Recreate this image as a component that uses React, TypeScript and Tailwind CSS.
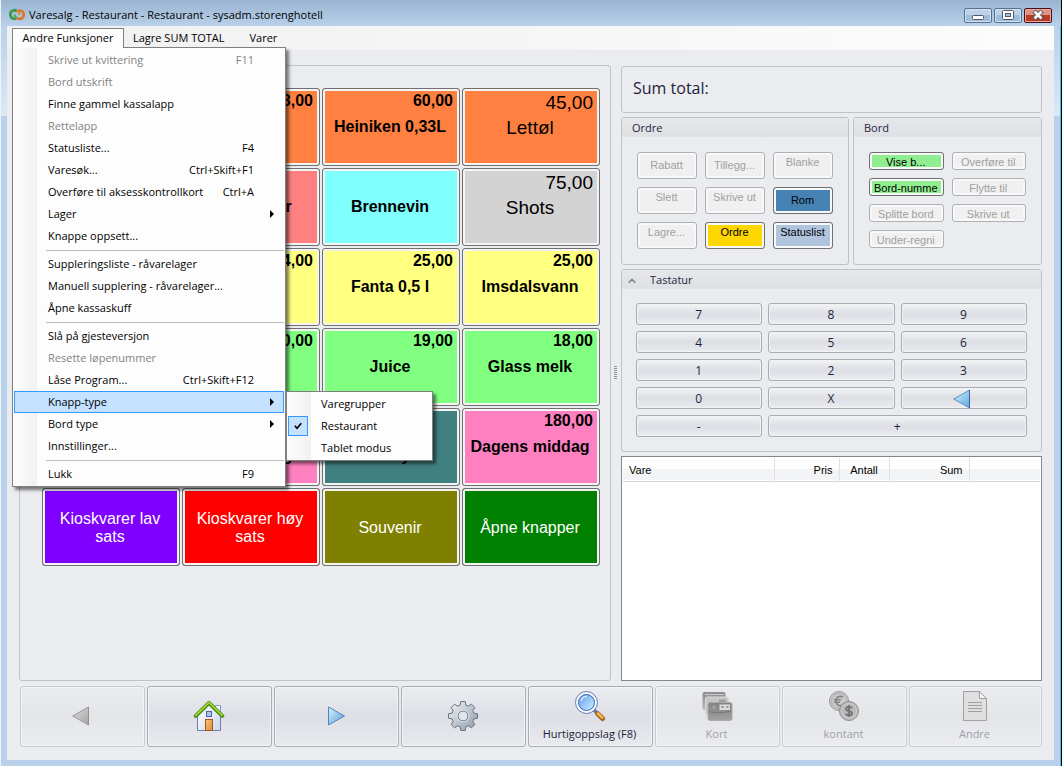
import type { ReactNode } from "react"
import clsx from "clsx"

type MenuEntry = {
  label: string
  shortcut?: string
  disabled?: boolean
  submenu?: boolean
  open?: boolean
}

type Product = {
  name?: string
  price?: string
  color: string
  large?: boolean
  light?: boolean
}

/* null draws a separator line */
const menuEntries: (MenuEntry | null)[] = [
  { label: "Skrive ut kvittering", shortcut: "F11", disabled: true },
  { label: "Bord utskrift", disabled: true },
  { label: "Finne gammel kassalapp" },
  { label: "Rettelapp", disabled: true },
  { label: "Statusliste...", shortcut: "F4" },
  { label: "Varesøk...", shortcut: "Ctrl+Skift+F1" },
  { label: "Overføre til aksesskontrollkort", shortcut: "Ctrl+A" },
  { label: "Lager", submenu: true },
  { label: "Knappe oppsett..." },
  null,
  { label: "Suppleringsliste - råvarelager" },
  { label: "Manuell supplering - råvarelager..." },
  { label: "Åpne kassaskuff" },
  null,
  { label: "Slå på gjesteversjon" },
  { label: "Resette løpenummer", disabled: true },
  { label: "Låse Program...", shortcut: "Ctrl+Skift+F12" },
  { label: "Knapp-type", submenu: true, open: true },
  { label: "Bord type", submenu: true },
  { label: "Innstillinger..." },
  null,
  { label: "Lukk", shortcut: "F9" },
]

const buttonTypes = [
  { label: "Varegrupper", checked: false },
  { label: "Restaurant", checked: true },
  { label: "Tablet modus", checked: false },
]

const products: Product[] = [
  { color: "bg-[#ff8040]" },
  { price: "68,00", color: "bg-[#ff8040]" },
  { name: "Heiniken 0,33L", price: "60,00", color: "bg-[#ff8040]" },
  { name: "Lettøl", price: "45,00", color: "bg-[#ff8040]", large: true },
  { color: "bg-[#ff8080]" },
  { name: "Rusdrikker", color: "bg-[#ff8080]" },
  { name: "Brennevin", color: "bg-[#80ffff]" },
  { name: "Shots", price: "75,00", color: "bg-[#d3d3d3]", large: true },
  { color: "bg-[#ffff80]" },
  { price: "24,00", color: "bg-[#ffff80]" },
  { name: "Fanta 0,5 l", price: "25,00", color: "bg-[#ffff80]" },
  { name: "Imsdalsvann", price: "25,00", color: "bg-[#ffff80]" },
  { color: "bg-[#80ff80]" },
  { price: "20,00", color: "bg-[#80ff80]" },
  { name: "Juice", price: "19,00", color: "bg-[#80ff80]" },
  { name: "Glass melk", price: "18,00", color: "bg-[#80ff80]" },
  { color: "bg-[#ff80c0]" },
  { name: "\njulemiddag", color: "bg-[#ff80c0]" },
  { name: "\nMeny", color: "bg-[#408080]" },
  { name: "Dagens middag", price: "180,00", color: "bg-[#ff80c0]" },
  { name: "Kioskvarer lav sats", color: "bg-[#8000ff]", light: true },
  { name: "Kioskvarer høy sats", color: "bg-[#ff0000]", light: true },
  { name: "Souvenir", color: "bg-[#808000]", light: true },
  { name: "Åpne knapper", color: "bg-[#008000]", light: true },
]

const orderActions = [
  { label: "Rabatt" },
  { label: "Tillegg..." },
  { label: "Blanke", top: true },
  { label: "Slett", top: true },
  { label: "Skrive ut", top: true },
  { label: "Rom", color: "bg-[#4682b4]" },
  { label: "Lagre...", top: true },
  { label: "Ordre", top: true, color: "bg-[#ffd700]" },
  { label: "Statuslist", top: true, color: "bg-[#b0c4de]" },
]

const tableActions = [
  { label: "Vise b...", color: "bg-[#90ee90]" },
  { label: "Overføre til" },
  { label: "Bord-numme", color: "bg-[#90ee90]" },
  { label: "Flytte til" },
  { label: "Splitte bord" },
  { label: "Skrive ut" },
  { label: "Under-regni" },
]

const keys = ["7", "8", "9", "4", "5", "6", "1", "2", "3", "0", "X", "back", "-", "+"]

const AppLogo = () => (
  <svg className="h-4 w-4" viewBox="0 0 16 16" fill="none" strokeWidth="2.8" aria-hidden="true">
    <path d="M8 4.2C6.6 3 3.6 2.8 2.2 4.6C.6 6.8 1.2 10 3.4 11.2C5 12 6.8 11.4 7.6 10.2" stroke="#3f9a4c" />
    <path d="M5.4 7.4C5.8 9.600 7 10.9 8.4 11.2" stroke="#58a85b" strokeWidth="2" />
    <path d="M8 11C9.6 12.2 12.4 12.2 13.8 10.4C15.4 8.2 14.8 5 12.6 4C11 3.2 9 3.8 8.4 5" stroke="#d9762b" />
    <path d="M10.6 8C10.2 5.8 9.4 4.6 7.8 4.2" stroke="#e08b3c" strokeWidth="2" />
  </svg>
)

const BackIcon = ({ muted = false }: { muted?: boolean }) => (
  <svg className="h-5 w-5" viewBox="0 0 20 20" aria-hidden="true">
    <defs>
      <linearGradient id={muted ? "backGray" : "backBlue"} x1="0" y1="0" x2="1" y2="1">
        <stop offset="0" stopColor={muted ? "#dcdcdc" : "#d8f3fd"} />
        <stop offset="1" stopColor={muted ? "#a4a4a4" : "#5da6dc"} />
      </linearGradient>
    </defs>
    <path d="M.8 10L16.500 1V19Z" fill={muted ? "url(#backGray)" : "url(#backBlue)"} stroke={muted ? "#999" : "#5b8fc4"} />
    <path d="M16.500 1V19" stroke={muted ? "#8f8f8f" : "#3a68ad"} />
  </svg>
)

const ForwardIcon = () => (
  <svg className="h-5 w-5" viewBox="0 0 20 20" aria-hidden="true">
    <defs>
      <linearGradient id="forward" x1="0" y1="0" x2="1" y2="1">
        <stop offset="0" stopColor="#d2f1fd" />
        <stop offset="1" stopColor="#5a9fd8" />
      </linearGradient>
    </defs>
    <path d="M2.500 1L18.500 10L2.500 19Z" fill="url(#forward)" stroke="#4d84bf" />
  </svg>
)

const HomeIcon = () => (
  <svg className="h-8 w-8" viewBox="0 0 32 32" aria-hidden="true">
    <defs>
      <linearGradient id="wall" x1="0" y1="0" x2="1" y2="1">
        <stop offset="0" stopColor="#fff" />
        <stop offset="1" stopColor="#ccd8ee" />
      </linearGradient>
      <linearGradient id="door" x1="0" y1="0" x2="1" y2="1">
        <stop offset="0" stopColor="#f8c67c" />
        <stop offset="1" stopColor="#df8a30" />
      </linearGradient>
    </defs>
    <path d="M22.500 5.500H27.500V14H22.500Z" fill="#f4f7fd" stroke="#8494c4" />
    <path d="M4.500 15L16 4L27.500 15V30.500H4.500Z" fill="url(#wall)" stroke="#6d7fb6" />
    <path d="M2.800 15.800L16 2.800L29.200 15.800" fill="none" stroke="#4f8a12" strokeWidth="4" strokeLinecap="round" strokeLinejoin="round" />
    <path d="M2.800 15.300L16 2.300L29.200 15.300" fill="none" stroke="#9bd636" strokeWidth="1.800" strokeLinecap="round" strokeLinejoin="round" />
    <rect x="13.500" y="11.500" width="5" height="5" fill="#a9c4ee" stroke="#4a62a8" />
    <rect x="12.500" y="19.500" width="7" height="11" fill="url(#door)" stroke="#a9541a" />
  </svg>
)

const GearIcon = () => (
  <svg className="h-8 w-8" viewBox="0 0 32 32" aria-hidden="true">
    <defs>
      <linearGradient id="gear" x1="0" y1="0" x2="1" y2="1">
        <stop offset="0" stopColor="#f4f6f9" />
        <stop offset="1" stopColor="#8b97a8" />
      </linearGradient>
    </defs>
    <path
      d="M13.800 1.500H18.200L18.900 5.200L21.200 6.200L24.500 4.200L27.800 7.500L25.800 10.800L26.800 13.100L30.500 13.800V18.200L26.800 18.900L25.800 21.200L27.800 24.500L24.500 27.800L21.200 25.800L18.900 26.800L18.200 30.500H13.800L13.100 26.800L10.800 25.800L7.500 27.800L4.200 24.500L6.200 21.200L5.200 18.900L1.500 18.200V13.800L5.200 13.100L6.200 10.800L4.200 7.500L7.500 4.200L10.800 6.200L13.100 5.200Z"
      fill="url(#gear)"
      stroke="#6a7280"
      strokeLinejoin="round"
    />
    <circle cx="16" cy="16" r="5" fill="#e3e5ea" stroke="#6a7280" />
    <circle cx="16" cy="16" r="6" fill="none" stroke="#eceff3" strokeWidth=".8" />
  </svg>
)

const SearchIcon = () => (
  <svg className="h-8 w-8" viewBox="0 0 32 32" aria-hidden="true">
    <defs>
      <linearGradient id="glass" x1="0" y1="0" x2="1" y2="1">
        <stop offset="0" stopColor="#5f9bea" />
        <stop offset="0.500" stopColor="#98c6f7" />
        <stop offset="1" stopColor="#c8f2ff" />
      </linearGradient>
    </defs>
    <path d="M20 20L23.500 23.500" stroke="#6474a4" strokeWidth="3.500" />
    <path d="M24 24L28.500 28.500" stroke="#a8661c" strokeWidth="5" strokeLinecap="round" />
    <path d="M24 23.500L28.200 27.700" stroke="#f6b84e" strokeWidth="2.500" strokeLinecap="round" />
    <circle cx="12.500" cy="12.500" r="11" fill="#f7faff" stroke="#6578b4" />
    <circle cx="12.500" cy="12.500" r="8" fill="url(#glass)" stroke="#3f62b0" />
    <path d="M7 11A6 6 0 0 1 13 6.500" fill="none" stroke="#cfe3fb" strokeWidth="1.500" />
  </svg>
)

const CardsIcon = () => (
  <svg className="h-8 w-8" viewBox="0 0 32 32" aria-hidden="true">
    <defs>
      <linearGradient id="cardBack" x1="0" y1="0" x2="0" y2="1">
        <stop offset="0" stopColor="#8c8c8c" />
        <stop offset="1" stopColor="#b9b9b9" />
      </linearGradient>
      <linearGradient id="cardFront" x1="0" y1="0" x2="0" y2="1">
        <stop offset="0" stopColor="#848484" />
        <stop offset="0.500" stopColor="#8f8f8f" />
        <stop offset="1" stopColor="#a2a2a2" />
      </linearGradient>
    </defs>
    <rect x="1.500" y="2" width="23" height="18" rx="2" fill="url(#cardBack)" />
    <path d="M4 4.500H23" stroke="#c6c6c6" />
    <rect x="4.500" y="7" width="23" height="18" rx="2" fill="#c6c6c6" stroke="#d9d9d9" />
    <path d="M18 9.500H25V12H18Z" fill="#a2a2a2" />
    <rect x="7" y="12.500" width="24" height="18" rx="2" fill="url(#cardFront)" stroke="#aaa" />
    <path d="M8 21.500C14 23.500 22 23 30 21" fill="none" stroke="#777" />
    <path d="M18.500 14.500H29V20H18.500Z" fill="#dcdcdc" />
    <path d="M20 17H23M25 17H27.500" stroke="#8a8a8a" strokeWidth="1.500" />
    <path d="M13 15V20M11 17.500H15" stroke="#a9a9a9" />
  </svg>
)

const CoinsIcon = () => (
  <svg className="h-8 w-8" viewBox="0 0 32 32" fill="none" aria-hidden="true">
    <circle cx="11" cy="11" r="9.500" fill="#c9c9c9" stroke="#979797" />
    <circle cx="11" cy="11" r="7.500" stroke="#b3b3b3" />
    <path d="M15 7.500C12 5 8 7 8 11C8 15 12 17 15 14.500M6 9.800H13M6 12.200H12" stroke="#858585" strokeWidth="1.600" />
    <circle cx="21" cy="21" r="9.500" fill="#bababa" stroke="#8f8f8f" />
    <circle cx="21" cy="21" r="7.500" stroke="#cdcdcd" />
    <path d="M24.200 18C22.500 16.500 18 16.500 18 19C18 22 24 20.500 24 23.200C24 25.800 19.500 25.700 17.800 24M21 15V27" stroke="#737373" strokeWidth="1.800" />
  </svg>
)

const PageIcon = () => (
  <svg className="h-8 w-8" viewBox="0 0 32 32" aria-hidden="true">
    <path d="M4.500 1.500H20.500L27.500 8.500V30.500H4.500Z" fill="#dfdfdf" stroke="#a0a0a0" />
    <path d="M20.500 1.500V8.500H27.500Z" fill="#f2f2f2" stroke="#a0a0a0" />
    <path d="M9 12.500H23M9 15.500H23M9 18.500H23M9 21.500H23" stroke="#a0a0a0" />
  </svg>
)

const toolbar: { label?: string; title: string; icon: ReactNode; disabled?: boolean }[] = [
  { title: "Tilbake", icon: <BackIcon muted />, disabled: true },
  { title: "Hjem", icon: <HomeIcon /> },
  { title: "Frem", icon: <ForwardIcon /> },
  { title: "Oppsett", icon: <GearIcon /> },
  { title: "Hurtigoppslag", label: "Hurtigoppslag (F8)", icon: <SearchIcon /> },
  { title: "Kort", label: "Kort", icon: <CardsIcon />, disabled: true },
  { title: "kontant", label: "kontant", icon: <CoinsIcon />, disabled: true },
  { title: "Andre", label: "Andre", icon: <PageIcon />, disabled: true },
]

const windowButton =
  "flex h-[15px] w-7 items-center justify-center rounded-[2px] border border-[#56708f] bg-linear-to-b from-[#bdd2e8] from-50% to-[#a0bcdb] to-50% shadow-[inset_0_0_0_1px_#d3e2f2]"

function TitleBar() {
  return (
    <header className="flex h-[26px] items-center justify-between bg-linear-to-b from-[#99b4d1] to-[#b9d1ea] pt-1 pr-[9px] pl-2">
      <h1 className="flex items-center gap-1 text-[11px] text-black">
        <AppLogo />
        Varesalg - Restaurant - Restaurant - sysadm.storenghotell
      </h1>
      <div className="flex gap-0.5">
        <button aria-label="Minimer" className={windowButton}>
          <svg className="h-3 w-3" viewBox="0 0 12 12" aria-hidden="true">
            <rect x=".5" y="6.500" width="11" height="4" rx="1" fill="#fff" stroke="#535666" />
          </svg>
        </button>
        <button aria-label="Maksimer" className={windowButton}>
          <svg className="h-3 w-3" viewBox="0 0 12 12" aria-hidden="true">
            <rect x=".5" y="1.500" width="11" height="9" rx="1" fill="#fff" stroke="#535666" />
            <rect x="3.500" y="4.500" width="5" height="3" fill="#a9c4e2" stroke="#535666" />
          </svg>
        </button>
        <button
          aria-label="Lukk"
          className="flex h-[15px] w-7 items-center justify-center rounded-[2px] border border-[#4c0f1a] bg-linear-to-b from-[#dd9388] from-50% to-[#b93a22] to-50% shadow-[inset_0_0_0_1px_#e8a89f]"
        >
          <svg className="h-3 w-3" viewBox="0 0 12 12" aria-hidden="true">
            <path d="M2 2L10 10M10 2L2 10" stroke="#535666" strokeWidth="4.500" />
            <path d="M2.500 2.500L9.500 9.500M9.500 2.500L2.500 9.500" stroke="#fff" strokeWidth="2.500" />
          </svg>
        </button>
      </div>
    </header>
  )
}

function SubMenu() {
  return (
    <ul
      role="menu"
      className="absolute top-0 left-full ml-0.5 w-[147px] border border-[#808080] bg-linear-to-r from-[#fdfdfd] to-[#f1f1f1] bg-[length:24px_100%] bg-no-repeat py-px shadow-[3px_3px_3px_rgba(0,0,0,0.5)] [background-color:#fdfdfd]"
    >
      {buttonTypes.map((type) => (
        <li key={type.label} role="none">
          <button role="menuitemradio" aria-checked={type.checked} className="flex h-[22px] w-full items-center gap-[13px] pl-px">
            <span
              className={clsx(
                "flex h-5 w-5 items-center justify-center border",
                type.checked ? "border-[#3399ff] bg-[#c4e1ff]" : "border-transparent",
              )}
            >
              {type.checked && (
                <svg className="h-2 w-2" viewBox="0 0 8 8" fill="none" aria-hidden="true">
                  <path d="M.8 3.800L3 6.200L7.300 1.300" stroke="#000" strokeWidth="1.600" />
                </svg>
              )}
            </span>
            {type.label}
          </button>
        </li>
      ))}
    </ul>
  )
}

function DropDown() {
  return (
    <ul
      role="menu"
      className="absolute top-[19px] left-0 z-10 w-[274px] border border-[#808080] bg-linear-to-r from-[#fdfdfd] to-[#f1f1f1] bg-[length:24px_100%] bg-no-repeat p-px shadow-[3px_3px_3px_rgba(0,0,0,0.5)] [background-color:#fdfdfd]"
    >
      {menuEntries.map((entry, i) =>
        entry ? (
          <li key={entry.label} role="none" className="relative">
            <button
              role="menuitem"
              disabled={entry.disabled}
              aria-haspopup={entry.submenu}
              className={clsx(
                "flex h-[22px] w-full items-center justify-between border pr-[9px] pl-[33px]",
                entry.open ? "border-[#3399ff] bg-[#c4e1ff]" : "border-transparent",
                entry.disabled && "text-[#838383]",
              )}
            >
              <span>{entry.label}</span>
              {entry.shortcut && <span className="mr-5">{entry.shortcut}</span>}
              {entry.submenu && (
                <svg className="h-2 w-1" viewBox="0 0 4 8" aria-hidden="true">
                  <path d="M0 0L4 4L0 8Z" fill="#000" />
                </svg>
              )}
            </button>
            {entry.open && <SubMenu />}
          </li>
        ) : (
          <li key={i} role="separator" className="ml-8 flex h-1.5 items-center">
            <span className="h-px w-full bg-[#bdbdbd]" />
          </li>
        ),
      )}
    </ul>
  )
}

function MenuBar() {
  return (
    <nav className="flex h-6 bg-linear-to-r from-[#f0f0f0] to-[#fcfcfc] pt-0.5 pl-[5px] text-[11px] text-black">
      <div className="relative">
        <button className="relative z-20 h-5 w-28 border border-b-0 border-[#808080] bg-[#fdfdfd]">Andre Funksjoner</button>
        <DropDown />
      </div>
      <button className="h-5 pr-4 pl-[9px]">Lagre SUM TOTAL</button>
      <button className="h-5 pr-4 pl-[9px]">Varer</button>
    </nav>
  )
}

function ProductButton({ product }: { product: Product }) {
  return (
    <button
      className={clsx(
        "grid h-[78px] grid-rows-[1fr_auto_1fr] rounded-[3px] border border-[#707070] px-1.5 shadow-[inset_0_0_0_2px_#f4f4f4]",
        product.color,
        product.large ? "text-[19px] leading-[22px]" : "text-base leading-[18px]",
        product.light ? "text-white" : "text-black",
        !product.large && !product.light && "font-bold",
        product.large || product.light ? "pt-[3px] pb-px" : "py-[3px]",
      )}
    >
      <span className="h-0 text-right">{product.price}</span>
      <span className="pr-0.5 whitespace-pre-line">{product.name}</span>
      <span />
    </button>
  )
}

function Panel({ title, collapsible, children }: { title: string; collapsible?: boolean; children: ReactNode }) {
  return (
    <section className="rounded-[3px] border border-[#c0c2c9]">
      <h2 className="flex h-[19px] items-center bg-linear-to-b from-[#e6e7ea] to-[#dfe0e4] pt-0.5 pl-[10px] text-[11px]">
        {collapsible && (
          <button aria-label="Skjul tastatur" className="mr-3.5 -ml-1">
            <svg className="h-2 w-2" viewBox="0 0 8 8" fill="none" aria-hidden="true">
              <path d="M.8 5.800L4 2.400L7.200 5.800" stroke="#7c7e88" strokeWidth="1.500" />
            </svg>
          </button>
        )}
        {title}
      </h2>
      {children}
    </section>
  )
}

function ActionButton({ label, color, top, className }: { label: string; color?: string; top?: boolean; className: string }) {
  return (
    <button
      disabled={!color}
      className={clsx(
        "flex justify-center overflow-hidden rounded-[3px] border pr-px text-[11px] leading-4 whitespace-nowrap shadow-[inset_0_0_0_2px_#f8f8f8]",
        color ? "border-[#707070] text-black" : "border-[#adb2b5] bg-[#f0f0f0] text-[#a0a0a0]",
        color,
        top ? "items-start pt-px" : "items-center",
        className,
      )}
    >
      {label}
    </button>
  )
}

function Keypad() {
  return (
    <div className="grid grid-cols-3 gap-1.5 p-[14px] text-xs">
      {keys.map((key) => (
        <button
          key={key}
          aria-label={key === "back" ? "Slett siste" : undefined}
          className={clsx(
            "flex h-[22px] items-center justify-center rounded-[3px] border border-[#a9abb5] bg-linear-to-b from-[#f3f4f6] via-[#dcdee4] to-[#ebecf0] pt-px pr-px shadow-[inset_0_0_0_1px_#f1f2f4]",
            key === "+" && "col-span-2",
          )}
        >
          {key === "back" ? <BackIcon /> : key}
        </button>
      ))}
    </div>
  )
}

function ReceiptTable() {
  return (
    <div className="flex-1 border border-[#828790] bg-white p-px">
      <table className="w-full table-fixed font-['Liberation_Sans',sans-serif] text-[11px] text-black">
        <thead>
          <tr className="h-[23px] border-b border-[#d5d5d5] bg-linear-to-b from-white from-50% to-[#f3f4f5] to-50%">
            <th className="w-[151px] border-r border-[#e0e0e3] px-1.5 pt-0.5 text-left font-normal">Vare</th>
            <th className="w-[65px] border-r border-[#e0e0e3] px-1.5 pt-0.5 text-right font-normal">Pris</th>
            <th className="w-[50px] border-r border-[#e0e0e3] pt-0.5 text-center font-normal">Antall</th>
            <th className="w-[80px] border-r border-[#e0e0e3] px-1.5 pt-0.5 text-right font-normal">Sum</th>
            <td />
          </tr>
        </thead>
        <tbody />
      </table>
    </div>
  )
}

function Toolbar() {
  return (
    <footer className="mt-[5px] grid grid-cols-[repeat(7,minmax(0,125fr))_minmax(0,133fr)] gap-0.5 pl-px">
      {toolbar.map((item) => (
        <button
          key={item.title}
          aria-label={item.label ? undefined : item.title}
          disabled={item.disabled}
          className={clsx(
            "flex h-[61px] flex-col items-center justify-center gap-1 rounded-[3px] border pr-0.5 pb-0.5 text-[11px] leading-4 shadow-[inset_0_0_0_1px_#f3f4f6]",
            item.disabled
              ? "border-[#c9cbd0] bg-linear-to-b from-[#ebecef] via-[#e4e5e9] to-[#ebecef] text-[#9fa0ab]"
              : "border-[#a9abb5] bg-linear-to-b from-[#ecedf0] via-[#dddfe6] to-[#e9eaee]",
          )}
        >
          {item.icon}
          {item.label}
        </button>
      ))}
    </footer>
  )
}

function App() {
  return (
    <div className="flex min-h-screen flex-col border-r border-l border-r-black border-l-[#eef3f9] bg-[#b9d1ea] font-['Open_Sans','Noto_Sans',sans-serif] text-[#1e1e3c]">
      <TitleBar />
      <div className="flex flex-1 flex-col border-r border-[#35c8ea] bg-linear-to-b from-[#b9d1ea] to-[#dce8f5] bg-[length:100%_90px] bg-no-repeat px-1.5 pb-1.5">
        <MenuBar />
        <main className="flex flex-1 flex-col bg-[#ebecef] px-3 pt-[15px] pb-[13px]">
          <div className="grid flex-1 grid-cols-[minmax(0,592fr)_10px_minmax(0,421fr)]">
            <section className="rounded-[3px] border border-[#c0c2c9] pt-[22px] pr-[10px] pl-[22px]">
              <div className="grid grid-cols-4 gap-0.5 font-['Liberation_Sans',sans-serif]">
                {products.map((product, i) => (
                  <ProductButton key={i} product={product} />
                ))}
              </div>
            </section>
            <div className="flex items-center pl-[3px]">
              <span className="h-[14px] w-[3px] bg-[repeating-linear-gradient(to_bottom,#8e9099_0_1px,transparent_1px_2px)]" />
            </div>
            <div className="flex flex-col gap-1 pt-px">
              <section className="flex h-[47px] items-center rounded-[3px] border border-[#c0c2c9] px-[11px] pb-[3px] text-base leading-5">
                Sum total:
              </section>
              <div className="grid grid-cols-[minmax(0,228fr)_minmax(0,189fr)] gap-1">
                <Panel title="Ordre">
                  <div className="grid grid-cols-3 gap-2 p-[15px] font-['Liberation_Sans',sans-serif]">
                    {orderActions.map((action) => (
                      <ActionButton key={action.label} {...action} className="h-[27px] pb-px" />
                    ))}
                  </div>
                </Panel>
                <Panel title="Bord">
                  <div className="grid grid-cols-2 gap-2 p-[15px] font-['Liberation_Sans',sans-serif]">
                    {tableActions.map((action) => (
                      <ActionButton key={action.label} {...action} className="h-[18px] pt-px" />
                    ))}
                  </div>
                </Panel>
              </div>
              <Panel title="Tastatur" collapsible>
                <Keypad />
              </Panel>
              <ReceiptTable />
            </div>
          </div>
          <Toolbar />
        </main>
      </div>
    </div>
  )
}

export default App
